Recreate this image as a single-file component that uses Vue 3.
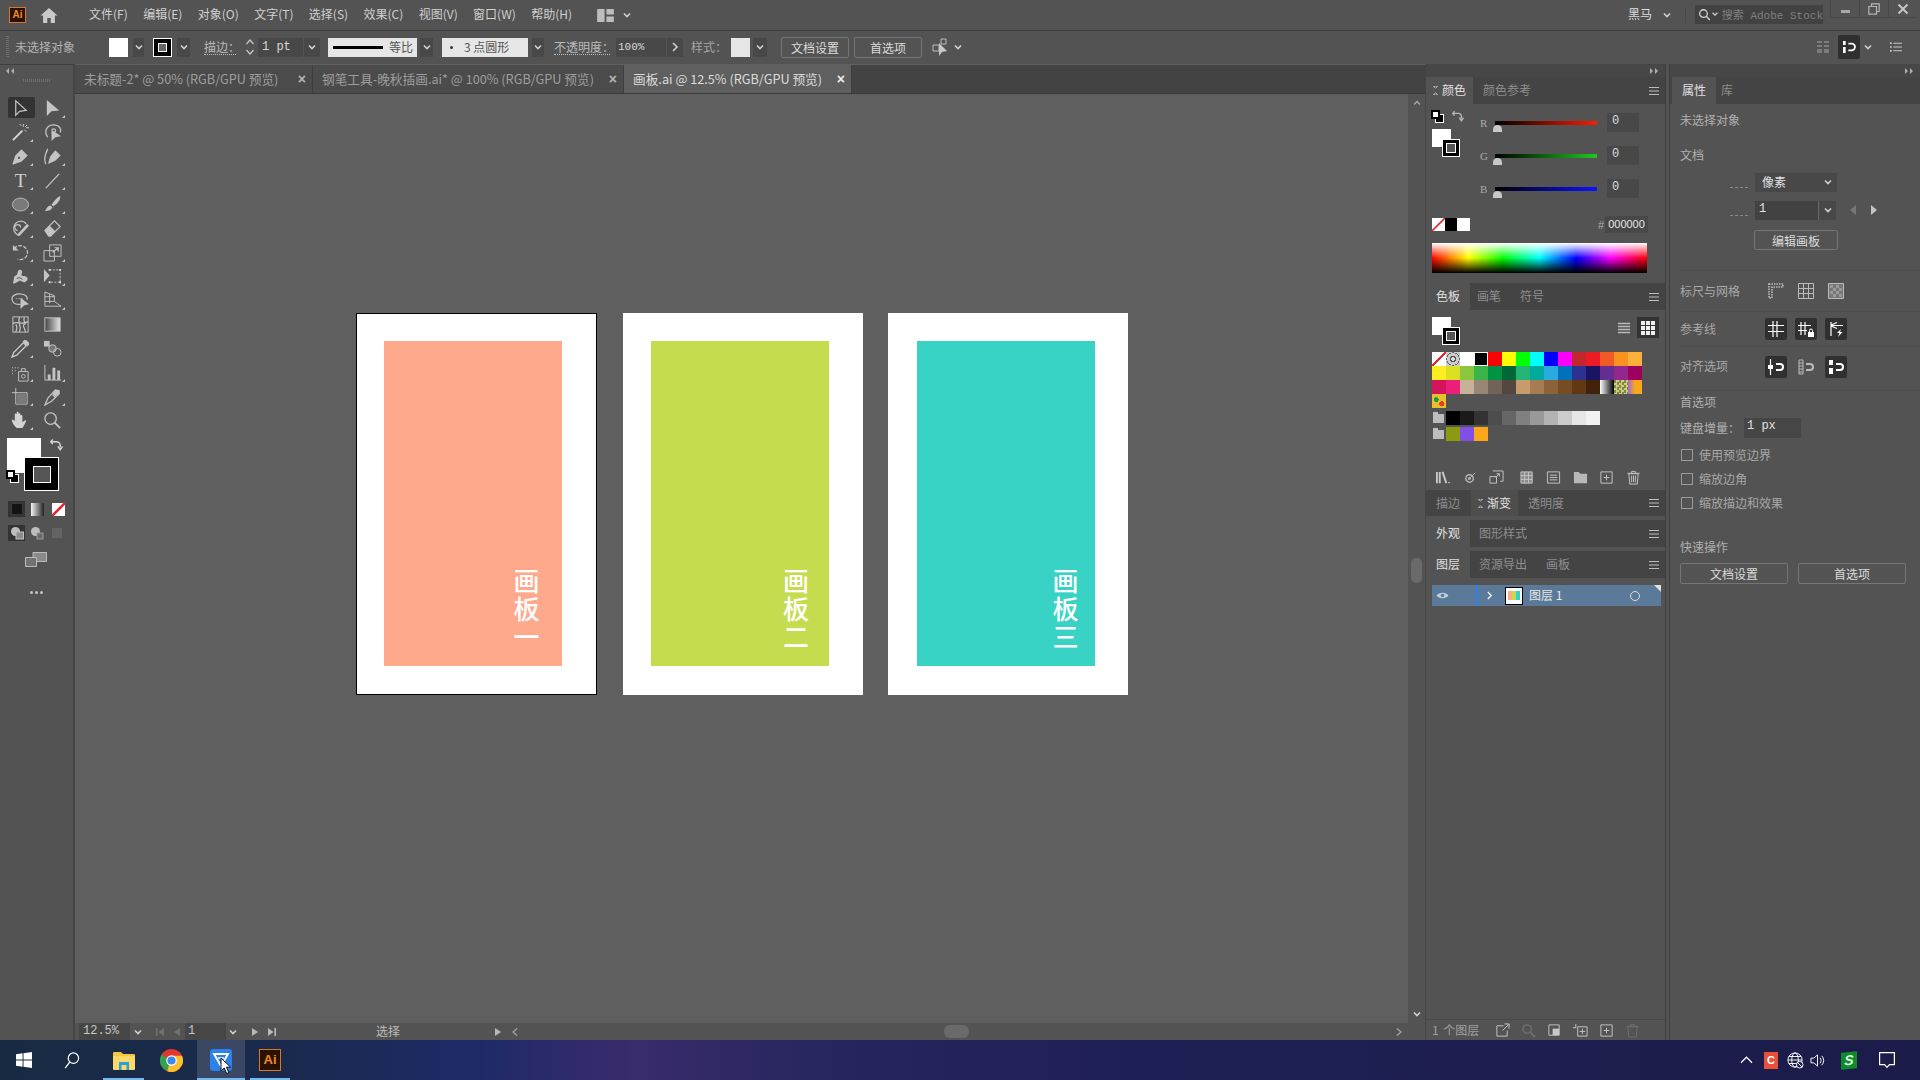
<template>
  <div class="app">
    <svg class="sprite" width="0" height="0">
      <symbol id="chev" viewBox="0 0 10 10"><path d="M2 3.5 5 6.5 8 3.5" fill="none" stroke="currentColor" stroke-width="1.6" /></symbol>
      <symbol id="burger" viewBox="0 0 12 10"><path d="M1 1.5h10M1 5h10M1 8.5h10" stroke="currentColor" stroke-width="1" /></symbol>
      <symbol id="dbl" viewBox="0 0 10 8"><path d="M1 1l3 3-3 3zM6 1l3 3-3 3z" fill="currentColor" /></symbol>
      <symbol id="mag" viewBox="0 0 24 22">
        <path d="M3 2h4v6H3zM3 11h4v9H3z" fill="currentColor" />
        <path d="M11 6h5a5 5 0 0 1 0 10h-5" fill="none" stroke="currentColor" stroke-width="2.6" />
      </symbol>
    </svg>

    <!-- menu bar -->
    <header class="menubar">
      <div class="ai-logo">Ai</div>
      <svg class="home" viewBox="0 0 18 16"><path d="M9 1 0.5 8.5h2.6V16h4.2v-5h3.4v5h4.2V8.5h2.6z" fill="#c9c9c9" /></svg>
      <nav class="menus"><span v-for="m in menus" :key="m">{{ m }}</span></nav>
      <svg class="wsp" viewBox="0 0 18 14"><path d="M0 0h8v14H0zM10 0h8v6h-8zM10 8h8v6h-8z" fill="#bdbdbd" /></svg>
      <svg class="ic10 wsp-c"><use href="#chev" /></svg>
      <div class="right-menu">
        <span class="user">黑马</span>
        <svg class="ic10 user-c"><use href="#chev" /></svg>
        <i class="vsep"></i>
        <div class="stock">
          <svg class="stock-i" viewBox="0 0 14 14"><circle cx="6" cy="6" r="4.2" fill="none" stroke="#d0d0d0" stroke-width="1.4" /><path d="M9 9l4 4" stroke="#d0d0d0" stroke-width="1.6" /></svg>
          <svg class="ic8"><use href="#chev" /></svg>
          <span>搜索 Adobe Stock</span>
        </div>
        <div class="winbtns">
          <span class="wb"><i class="min"></i></span>
          <span class="wb"><svg width="12" height="12" viewBox="0 0 12 12"><path d="M3.5 3V.8h7.7v7.7H9M.8 3.5h7.7v7.7H.8z" fill="none" stroke="#b5b5b5" stroke-width="1.2" /></svg></span>
          <span class="wb"><svg width="12" height="12" viewBox="0 0 12 12"><path d="M1.5 1.5l9 9M10.5 1.5l-9 9" stroke="#c4c4c4" stroke-width="2" /></svg></span>
        </div>
      </div>
    </header>

    <!-- control bar -->
    <div class="controlbar">
      <i class="grip"></i>
      <span class="c-label">未选择对象</span>
      <i class="c-fill"></i>
      <span class="c-chev c1"><svg class="ic10"><use href="#chev" /></svg></span>
      <span class="c-stroke"><i></i></span>
      <span class="c-chev c2"><svg class="ic10"><use href="#chev" /></svg></span>
      <span class="c-under c-strokelabel">描边：</span>
      <svg class="c-spin" viewBox="0 0 10 20"><path d="M1.5 7 5 3l3.5 4M1.5 13 5 17l3.5-4" fill="none" stroke="#c8c8c8" stroke-width="1.2" /></svg>
      <span class="c-input c-pt">1 pt</span>
      <span class="c-chev c3"><svg class="ic10"><use href="#chev" /></svg></span>
      <span class="c-line"><i></i><b>等比</b></span>
      <span class="c-chev c4"><svg class="ic10"><use href="#chev" /></svg></span>
      <span class="c-point"><i></i>3 点圆形</span>
      <span class="c-chev c5"><svg class="ic10"><use href="#chev" /></svg></span>
      <span class="c-under c-opacity">不透明度：</span>
      <span class="c-input c-pct">100%</span>
      <span class="c-chev c6"><svg width="8" height="12" viewBox="0 0 8 12"><path d="M2 2l4 4-4 4" fill="none" stroke="#d0d0d0" stroke-width="1.6" /></svg></span>
      <span class="c-style">样式：</span>
      <i class="c-sw"></i>
      <span class="c-chev c7"><svg class="ic10"><use href="#chev" /></svg></span>
      <button class="btn c-b1">文档设置</button>
      <button class="btn c-b2">首选项</button>
      <svg class="c-arr" viewBox="0 0 16 20"><path d="M1 8h6v6H1zM9 2h5v5H9z" fill="none" stroke="#bdbdbd" /><path d="M7 6v13l3-4 5-1z" fill="#c8c8c8" /></svg>
      <svg class="ic10 c-arr-c"><use href="#chev" /></svg>
      <div class="c-right">
        <svg class="c-grid" viewBox="0 0 12 12"><path d="M0 0h5v2H0zM7 0h5v2H7zM0 4h5v2H0zM7 4h5v2H7zM0 8h5v4H0zM7 8h5v4H7z" fill="#7c7c7c" /></svg>
        <span class="c-snap"><svg width="16" height="16" class="wh"><use href="#mag" /></svg></span>
        <svg class="ic10 c-snap-c"><use href="#chev" /></svg>
        <svg class="c-list" viewBox="0 0 14 12"><path d="M4 1.5h10M4 6h10M4 10.5h10" stroke="#c8c8c8" stroke-width="1.2" /><path d="M0 .5h2v2H0zM0 5h2v2H0zM0 9.5h2v2H0z" fill="#c8c8c8" /></svg>
      </div>
    </div>

    <div class="workspace">
      <!-- tools -->
      <aside class="toolbar">
        <svg class="tb-dbl ic8dim" viewBox="0 0 10 8"><path d="M4 1 1 4l3 3zM9 1 6 4l3 3z" fill="#b0b0b0" /></svg>
        <div class="tb-grip"></div>
        <div class="tool-grid">
          <div v-for="(t, i) in tools" :key="i" class="tool" :class="{ sel: i === 0, more: t.more }">
            <svg viewBox="0 0 20 20" v-html="t.svg"></svg>
          </div>
        </div>
        <div class="tb-fs">
          <i class="tb-fill"></i>
          <i class="tb-stroke"><b></b></i>
          <svg class="tb-swap" viewBox="0 0 14 14"><path d="M1 4h6a4 4 0 0 1 4 4v2M3 1.5 .8 4 3 6.5M8.5 9l2.5 3.5L13.5 9" fill="none" stroke="#d5d5d5" stroke-width="1.6" /></svg>
          <span class="def"><i></i><b></b></span>
        </div>
        <div class="tb-mode">
          <span class="on"><i class="m-color"></i></span>
          <span><i class="m-grad"></i></span>
          <span><svg width="13" height="13" viewBox="0 0 13 13"><path d="M0 0h13v13H0z" fill="#fff" /><path d="M0 13 13 0" stroke="#e3272c" stroke-width="2.6" /></svg></span>
        </div>
        <div class="tb-draw">
          <span class="on"><svg width="14" height="14" viewBox="0 0 14 14"><circle cx="5.5" cy="5.5" r="4.5" fill="#bdbdbd" /><rect x="6" y="6" width="7.5" height="7" fill="#8c8c8c" stroke="#c0c0c0" /></svg></span>
          <span><svg width="14" height="14" viewBox="0 0 14 14"><circle cx="5.5" cy="5.5" r="4.5" fill="#bdbdbd" /><rect x="7" y="7" width="6" height="6" fill="#6c6c6c" stroke="#999" /></svg></span>
          <span class="off"><svg width="14" height="14" viewBox="0 0 14 14"><rect x="2" y="2" width="10" height="10" fill="#696969" /></svg></span>
        </div>
        <svg class="tb-screen" viewBox="0 0 22 15"><path d="M8 .5h13.5v9H8z" fill="#8a8a8a" stroke="#bcbcbc" /><path d="M.5 5.5h11v9H.5z" fill="#727272" stroke="#bcbcbc" /></svg>
        <div class="tb-dots"><i></i><i></i><i></i></div>
      </aside>

      <!-- document area -->
      <main class="center">
        <div class="tabs">
          <div class="tab t1">未标题-2* @ 50% (RGB/GPU 预览)<b>×</b></div>
          <div class="tab t2">钢笔工具-晚秋插画.ai* @ 100% (RGB/GPU 预览)<b>×</b></div>
          <div class="tab t3 active">画板.ai @ 12.5% (RGB/GPU 预览)<b>×</b></div>
        </div>
        <div class="canvas-row">
          <div class="canvas">
            <div v-for="a in boards" :key="a.text" class="board" :class="a.cls">
              <div class="inner" :style="{ background: a.color, paddingRight: a.right + 'px' }">
                <span class="board-text">{{ a.text }}</span>
              </div>
            </div>
          </div>
          <div class="vscroll">
            <svg class="ic10" viewBox="0 0 10 10"><path d="M2 6.5 5 3.5 8 6.5" fill="none" stroke="#a8a8a8" stroke-width="1.4" /></svg>
            <i class="vthumb"></i>
            <svg class="ic10"><use href="#chev" /></svg>
          </div>
        </div>
        <div class="status">
          <span class="st-zoom">12.5%</span>
          <svg class="ic10 st-c1"><use href="#chev" /></svg>
          <svg class="st-a a1" viewBox="0 0 10 10"><path d="M1 1h1.6v8H1zM9 1v8L3.5 5z" fill="#707070" /></svg>
          <svg class="st-a a2" viewBox="0 0 10 10"><path d="M8 1v8L2 5z" fill="#707070" /></svg>
          <span class="st-page">1</span>
          <svg class="ic10 st-c2"><use href="#chev" /></svg>
          <svg class="st-a a3" viewBox="0 0 10 10"><path d="M2 1v8l6-4z" fill="#b8b8b8" /></svg>
          <svg class="st-a a4" viewBox="0 0 10 10"><path d="M1 1v8l5.5-4zM7.4 1H9v8H7.4z" fill="#b8b8b8" /></svg>
          <span class="st-mode">选择</span>
          <svg class="st-a a5" viewBox="0 0 10 10"><path d="M2 1v8l6-4z" fill="#b8b8b8" /></svg>
          <svg class="st-a a6" viewBox="0 0 10 10"><path d="M7 1.5 3 5l4 3.5" fill="none" stroke="#a8a8a8" stroke-width="1.2" /></svg>
          <i class="hthumb"></i>
          <svg class="st-a a7" viewBox="0 0 10 10"><path d="M3 1.5 7 5 3 8.5" fill="none" stroke="#a8a8a8" stroke-width="1.2" /></svg>
        </div>
      </main>

      <!-- colour / swatches / layers -->
      <section class="dock">
        <div class="dock-strip"><svg class="dbl"><use href="#dbl" /></svg></div>

        <div class="ptabs h-color">
          <span class="ptab active"><em class="updown"></em>颜色</span>
          <span class="ptab-off o-guide">颜色参考</span>
          <svg class="burger"><use href="#burger" /></svg>
        </div>
        <div class="color-body">
          <div class="color-top">
            <div class="stack">
              <span class="def small"><i></i><b></b></span>
              <svg class="swap" viewBox="0 0 14 14"><path d="M1 4h6a4 4 0 0 1 4 4v2M3 1.5 .8 4 3 6.5M8.5 9l2.5 3.5L13.5 9" fill="none" stroke="#b5b5b5" stroke-width="1.6" /></svg>
              <div class="fs"><i class="fs-fill"></i><i class="fs-stroke"><b></b></i></div>
            </div>
            <div class="sliders">
              <div v-for="c in channels" :key="c.n" class="slider-row">
                <span class="ch">{{ c.n }}</span>
                <div class="track"><i :style="{ background: `linear-gradient(to right, #000, ${c.c})` }"></i><em></em></div>
                <span class="num">0</span>
              </div>
            </div>
          </div>
          <div class="hex-row">
            <svg class="sw13" viewBox="0 0 13 13"><path d="M0 0h13v13H0z" fill="#fff" /><path d="M0 13 13 0" stroke="#e3272c" stroke-width="1.6" /></svg>
            <i class="sw-k"></i><i class="sw-w"></i>
            <span class="hash">#</span>
            <span class="hex">000000</span>
          </div>
          <div class="spectrum"></div>
        </div>

        <div class="ptabs h-swatch">
          <span class="ptab active plain">色板</span>
          <span class="ptab-off o-brush">画笔</span>
          <span class="ptab-off o-sym">符号</span>
          <svg class="burger"><use href="#burger" /></svg>
        </div>
        <div class="swatch-body">
          <div class="sw-top">
            <div class="fs"><i class="fs-fill"></i><i class="fs-stroke"><b></b></i></div>
            <svg class="sw-list" viewBox="0 0 12 12"><path d="M0 1.5h12M0 4.5h12M0 7.5h12M0 10.5h12" stroke="#bdbdbd" stroke-width="1.5" /></svg>
            <span class="sw-gridbtn"><svg width="14" height="14" viewBox="0 0 14 14"><path d="M0 0h4v4H0zM5 0h4v4H5zM10 0h4v4h-4zM0 5h4v4H0zM5 5h4v4H5zM10 5h4v4h-4zM0 10h4v4H0zM5 10h4v4H5zM10 10h4v4h-4z" fill="#eee" /></svg></span>
          </div>
          <div class="sw-grid">
            <div v-for="(row, r) in swatchRows" :key="r" class="sw-row" :class="'r' + r">
              <i v-for="(c, k) in row" :key="k" class="cell" :class="c.startsWith('#') ? '' : c" :style="c.startsWith('#') ? { background: c } : null"></i>
            </div>
          </div>
          <div class="sw-foot">
            <svg v-for="(ic, i) in swatchFoot" :key="i" viewBox="0 0 16 16" v-html="ic"></svg>
          </div>
        </div>

        <div class="ptabs h-mini">
          <span class="ptab-off o-stroke">描边</span>
          <span class="ptab active mid"><em class="updown"></em>渐变</span>
          <span class="ptab-off o-trans">透明度</span>
          <svg class="burger"><use href="#burger" /></svg>
        </div>
        <div class="ptabs h-mini gap">
          <span class="ptab active plain">外观</span>
          <span class="ptab-off o-gs">图形样式</span>
          <svg class="burger"><use href="#burger" /></svg>
        </div>
        <div class="ptabs h-mini gap">
          <span class="ptab active plain">图层</span>
          <span class="ptab-off o-gs">资源导出</span>
          <span class="ptab-off o-ab">画板</span>
          <svg class="burger"><use href="#burger" /></svg>
        </div>
        <div class="layers">
          <div class="layer-row">
            <svg class="eye" viewBox="0 0 14 10"><path d="M.5 5C3 1 11 1 13.5 5 11 9 3 9 .5 5z" fill="#c5d0dc" /><circle cx="7" cy="5" r="2" fill="#5b7a99" /></svg>
            <i class="l-bar"></i>
            <svg class="l-arrow" viewBox="0 0 8 10"><path d="M2 1l4 4-4 4" fill="none" stroke="#eee" stroke-width="1.6" /></svg>
            <span class="l-thumb"><i></i></span>
            <span class="l-name">图层 1</span>
            <i class="l-circle"></i>
            <i class="l-corner"></i>
          </div>
        </div>
        <div class="layers-foot">
          <span>1 个图层</span>
          <svg v-for="(ic, i) in layerFoot" :key="i" viewBox="0 0 16 16" v-html="ic"></svg>
        </div>
      </section>

      <!-- properties -->
      <section class="props">
        <div class="dock-strip"><svg class="dbl"><use href="#dbl" /></svg></div>
        <div class="ptabs h-color">
          <span class="ptab active plain prop-tab">属性</span>
          <span class="ptab-off o-lib">库</span>
        </div>
        <div class="p-body">
          <div class="p-title first">未选择对象</div>
          <div class="p-title doc">文档</div>
          <div class="p-row r-unit">
            <i class="dash"></i>
            <span class="p-select">像素<svg class="ic10"><use href="#chev" /></svg></span>
          </div>
          <div class="p-row r-ab">
            <i class="dash"></i>
            <span class="p-abnum">1</span>
            <span class="p-abchev"><svg class="ic10"><use href="#chev" /></svg></span>
            <svg class="p-nav dim" viewBox="0 0 8 10"><path d="M7 0v10L1 5z" fill="#777" /></svg>
            <svg class="p-nav" viewBox="0 0 8 10"><path d="M1 0v10l6-5z" fill="#c4c4c4" /></svg>
          </div>
          <button class="btn p-edit">编辑画板</button>

          <div class="p-sec s-ruler">
            <span class="p-lab">标尺与网格</span>
            <span class="p-ic"><svg viewBox="0 0 16 16"><path d="M1 1h14v3H4v11H1z" fill="none" stroke="#bbb" stroke-dasharray="1.5 1" stroke-width="1.6" /></svg></span>
            <span class="p-ic"><svg viewBox="0 0 16 16"><path d="M.5.5h15v15H.5zM5.5.5v15M10.5.5v15M.5 5.5h15M.5 10.5h15" fill="none" stroke="#bbb" /></svg></span>
            <span class="p-ic"><svg viewBox="0 0 16 16"><path d="M.5.5h15v15H.5z" fill="#777" stroke="#bbb" /><path d="M2 2h3v3H2zM8 2h3v3H8zM5 5h3v3H5zM11 5h3v3h-3zM2 8h3v3H2zM8 8h3v3H8zM5 11h3v3H5zM11 11h3v3h-3z" fill="#999" /></svg></span>
          </div>
          <div class="p-sec s-guide">
            <span class="p-lab">参考线</span>
            <span class="p-ic dark"><svg viewBox="0 0 16 16"><path d="M5 0v16M9 0v16M0 4.5h16M0 10.5h16" stroke="#fff" stroke-width="1.2" /></svg></span>
            <span class="p-ic dark"><svg viewBox="0 0 16 16"><path d="M3 1v13M7 1v13M0 4.5h13M0 9.5h9" stroke="#fff" stroke-width="1.2" /><path d="M10 11h6v5h-6z" fill="#fff" /><path d="M11.5 11V9.5a1.5 1.5 0 0 1 3 0V11" fill="none" stroke="#fff" /></svg></span>
            <span class="p-ic dark"><svg viewBox="0 0 16 16"><path d="M3 1v14M3 4l6-2.5M3 5l6 2.5M3 4.5h12" stroke="#fff" stroke-width="1.2" fill="none" /><path d="M13 8l-4 4h2.5L10 16l4.5-5H12z" fill="#fff" /></svg></span>
          </div>
          <div class="p-sec s-align">
            <span class="p-lab">对齐选项</span>
            <span class="p-ic dark"><svg viewBox="0 0 16 16"><path d="M2.5 0v16" stroke="#fff" stroke-width="1.2" /><path d="M0 6h5v4H0z" fill="#fff" /><path d="M8 5h4a3 3 0 0 1 0 6H8" fill="none" stroke="#fff" stroke-width="2" /></svg></span>
            <span class="p-ic"><svg viewBox="0 0 16 16"><path d="M1 1h4v14H1zM1 4h4M1 7h4M1 10h4M1 13h4" fill="none" stroke="#bbb" /><path d="M8 5h4a3 3 0 0 1 0 6H8" fill="none" stroke="#bbb" stroke-width="2" /></svg></span>
            <span class="p-ic dark"><svg viewBox="0 0 16 16"><path d="M1 1h4v5H1zM1 9h4v6H1z" fill="#fff" /><path d="M8 5h4a3 3 0 0 1 0 6H8" fill="none" stroke="#fff" stroke-width="2" /></svg></span>
          </div>

          <div class="p-title pref">首选项</div>
          <div class="p-key"><span>键盘增量：</span><span class="p-inp">1 px</span></div>
          <label class="p-check"><i></i>使用预览边界</label>
          <label class="p-check"><i></i>缩放边角</label>
          <label class="p-check"><i></i>缩放描边和效果</label>
          <div class="p-title quick">快速操作</div>
          <div class="p-btns">
            <button class="btn">文档设置</button>
            <button class="btn">首选项</button>
          </div>
        </div>
      </section>
    </div>

    <!-- windows taskbar -->
    <footer class="taskbar">
      <svg class="tk win" viewBox="0 0 17 17"><path d="M0 2.4 7 1.4v6.6H0zM8 1.2 17 0v8H8zM0 9h7v6.6l-7-1zM8 9h9v8l-9-1.2z" fill="#fff" /></svg>
      <svg class="tk search" viewBox="0 0 16 18"><circle cx="9.5" cy="6.5" r="5.5" fill="none" stroke="#fff" stroke-width="1.3" /><path d="M5.5 10.8.8 17" stroke="#fff" stroke-width="1.4" /></svg>
      <span class="tk-slot s-exp">
        <svg class="tk" viewBox="0 0 22 19"><path d="M0 2a1 1 0 0 1 1-1h7l2 2h11a1 1 0 0 1 1 1v14H0z" fill="#f4c542" /><path d="M0 5h22v13a1 1 0 0 1-1 1H1a1 1 0 0 1-1-1z" fill="#fbd968" /><path d="M6 11h10v8h-2.500v-5h-5v5H6z" fill="#2a9fe0" /></svg>
      </span>
      <span class="tk-slot s-chrome">
        <svg class="tk" viewBox="0 0 24 24"><circle cx="12" cy="12" r="12" fill="#e0382e" /><path d="M12 12 1.6 6a12 12 0 0 0 6 17z" fill="#2ea44f" /><path d="M12 7h10.900A12 12 0 0 1 7.600 23.100z" fill="#fbc02d" /><circle cx="12" cy="12" r="5.500" fill="#fff" /><circle cx="12" cy="12" r="4.300" fill="#3f86ee" /></svg>
      </span>
      <span class="tk-slot s-app">
        <svg class="tk" viewBox="0 0 22 22"><rect width="22" height="22" rx="3" fill="#2a82ea" /><path d="M4 5h14l-7 12z" fill="none" stroke="#fff" stroke-width="2" /><path d="M8 9h6" stroke="#fff" stroke-width="1.500" /></svg>
        <svg class="cursor" viewBox="0 0 12 18"><path d="M1 1v13l3.200-3 2.500 5.500 2.200-1-2.500-5.300h4.300z" fill="#fff" stroke="#111" /></svg>
        <i class="badge"></i>
      </span>
      <span class="tk-slot s-ai"><span class="ai-tk">Ai</span></span>
      <div class="tray">
        <svg class="t-up" viewBox="0 0 14 8"><path d="M1 7l6-6 6 6" fill="none" stroke="#fff" stroke-width="1.300" /></svg>
        <span class="t-c">C</span>
        <svg class="t-globe" viewBox="0 0 18 18"><circle cx="8.500" cy="8.500" r="7.500" fill="none" stroke="#fff" /><ellipse cx="8.500" cy="8.500" rx="3.500" ry="7.500" fill="none" stroke="#fff" /><path d="M1 8.500h15M2 4.800h13M2 12.200h13" stroke="#fff" /><circle cx="13.500" cy="13.500" r="3.500" fill="#1d1d50" stroke="#fff" /><path d="M11 11l5 5" stroke="#fff" /></svg>
        <svg class="t-sound" viewBox="0 0 16 16"><path d="M1 5.500h3L8 2v12L4 10.500H1z" fill="none" stroke="#fff" /><path d="M10.500 5a4 4 0 0 1 0 6M12.500 3a7 7 0 0 1 0 10" fill="none" stroke="#fff" /></svg>
        <span class="t-s">S</span>
        <svg class="t-note" viewBox="0 0 16 16"><path d="M.6.6h14.800v12H10.500L8 15.300l-2.500-2.700H.6z" fill="none" stroke="#fff" stroke-width="1.200" /></svg>
      </div>
    </footer>
  </div>
</template>

<script setup>
const menus = ['文件(F)', '编辑(E)', '对象(O)', '文字(T)', '选择(S)', '效果(C)', '视图(V)', '窗口(W)', '帮助(H)']

const boards = [
  { text: '画板一', color: '#ffa98c', right: 23, cls: 'b1' },
  { text: '画板二', color: '#c5dc4f', right: 20, cls: 'b2' },
  { text: '画板三', color: '#38d3c4', right: 17, cls: 'b3' }
]

const channels = [
  { n: 'R', c: '#ff1a00' },
  { n: 'G', c: '#1fc81f' },
  { n: 'B', c: '#0a14ff' }
]

const line = 'fill="none" stroke="#c4c4c4" stroke-width="1.3"'
const solid = 'fill="#c4c4c4"'

const tools = [
  { svg: `<path d="M5 2v15l4-4 7-1z" ${line} />` },
  { svg: `<path d="M4 1v17l5-5 8-1z" ${solid} />`, more: true },
  { svg: `<path d="M2 18 12 8" stroke="#d8d8d8" stroke-width="2" /><path d="M13 1v3M16 5h3M14 7l2 2M11 3 9 1M17 2l-2 2" stroke="#ccc" />`, more: true },
  { svg: `<path d="M5 15C0 8 5 2 11 2s9 4 7 8" ${line} /><path d="M9 7c3-2 5 0 4 2l-4 2" ${line} /><path d="M9 7v12l4-4 6-1z" ${solid} />` },
  { svg: `<path d="M2 18 5 9 11 3l6 6-6 6zM2 18l5-5" ${solid} stroke="#c4c4c4" /><circle cx="8.500" cy="11.500" r="1.200" fill="#535353" />`, more: true },
  { svg: `<path d="M3 18C0 12 3 6 5 2" ${line} /><path d="M6 17 8 10l5-6 5 5-5 5zM6 17l4-4" ${solid} stroke="#c4c4c4" />`, more: true },
  { svg: `<text x="10" y="17" text-anchor="middle" font-family="Liberation Serif, serif" font-size="20" fill="#cfcfcf">T</text>`, more: true },
  { svg: `<path d="M3 18 17 3" stroke="#c4c4c4" stroke-width="1.300" />`, more: true },
  { svg: `<ellipse cx="10" cy="10" rx="8.500" ry="6.800" fill="#7a7a7a" stroke="#b8b8b8" />`, more: true },
  { svg: `<path d="M18 1c1 4-3 8-7 11l-2-2c3-4 6-8 9-9z" ${solid} /><path d="M8 11c-3 0-4 3-6 6 4 0 7-1 8-4z" ${solid} />`, more: true },
  { svg: `<path d="M16 5A7.500 7.500 0 1 0 8 17" ${line} stroke-width="2" /><path d="M10 9a3 3 0 1 0-3 3" ${line} /><path d="M6 17 17 5l2 2L9 18z" ${solid} />`, more: true },
  { svg: `<path d="M2 12 12 2l6 6-10 10H6z" fill="none" stroke="#c4c4c4" stroke-width="1.300" /><path d="M7 7l6 6L8 18H6l-4-6z" ${solid} />`, more: true },
  { svg: `<path d="M3 6c4-5 12-4 14 2s-4 11-10 9" ${line} stroke-width="1.800" stroke-dasharray="4 1.500" /><path d="M2 2v6h6z" ${solid} />`, more: true },
  { svg: `<path d="M1 8h11v11H1z" fill="none" stroke="#c4c4c4" /><path d="M7 2h12v12H7z" fill="none" stroke="#c4c4c4" /><path d="M10 10l6-5M12 5h4v4" ${line} />`, more: true },
  { svg: `<path d="M2 17c2-5 0-7 3-8s1-5 4-6 3 3 2 5 4 1 6 3-2 6-4 5-4-2-5-1-5 3-6 2z" ${solid} /><path d="M6 12c2-1 4-1 6 1" fill="none" stroke="#535353" />`, more: true },
  { svg: `<path d="M1 2v14l6-7z" ${solid} /><path d="M7 3h11v13H7" fill="none" stroke="#c4c4c4" stroke-dasharray="2 1.500" /><path d="M6 2h2v2H6zM17 2h2v2h-2zM17 15h2v2h-2zM6 15h2v2H6z" fill="#e0e0e0" />`, more: true },
  { svg: `<path d="M10 14C3 15 1 11 1 8s4-5 8-5 9 2 8 6" ${line} /><path d="M5 8h1M8 8h1M11 8h1" stroke="#ddd" /><path d="M10 7v12l4-4 5-1z" ${solid} />`, more: true },
  { svg: `<path d="M2 1v15h17L12 11V5zM2 6h10M2 11h10M7 3v10" fill="none" stroke="#c4c4c4" />`, more: true },
  { svg: `<rect x="2" y="2" width="16" height="16" fill="none" stroke="#c4c4c4" /><path d="M2 9c5-3 8 2 16-2M9 2c-3 6 3 9 0 16M5 18c2-5 1-7 0-8M14 2c-2 5 3 7 0 8s2 5 1 8" ${line} />` },
  { svg: `<defs><linearGradient id="tg"><stop offset="0" stop-color="#444" /><stop offset="1" stop-color="#e6e6e6" /></linearGradient></defs><rect x="2" y="3" width="16" height="14" fill="url(#tg)" stroke="#c4c4c4" />` },
  { svg: `<path d="M1 19l2-5L13 4l3 3L6 17z" fill="none" stroke="#d0d0d0" stroke-width="1.300" /><path d="M12 3l2-2 2 0 3 3 0 2-2 2-1-1z" ${solid} />`, more: true },
  { svg: `<path d="M1 2h6v6H1z" ${solid} /><circle cx="10" cy="10" r="4" fill="#777" stroke="#c4c4c4" /><circle cx="15" cy="14" r="4" fill="none" stroke="#c4c4c4" />` },
  { svg: `<path d="M1 5h1M4 5h1M7 5h1M1 8h1M4 8h1M1 11h1" stroke="#aaa" stroke-width="1.500" /><path d="M8 9h10v10H8zM11 9V6h4v3" fill="none" stroke="#c4c4c4" /><circle cx="13" cy="14" r="2" fill="none" stroke="#c4c4c4" />`, more: true },
  { svg: `<path d="M2 2v16h17" fill="none" stroke="#c4c4c4" /><path d="M5 12h3v6H5zM10 5h3v13h-3zM15 8h3v10h-3z" ${solid} />`, more: true },
  { svg: `<path d="M1 6h5M5 1v5M5 6h12v12H5z" fill="none" stroke="#c4c4c4" /><path d="M6 7h10v10H6z" fill="#7a7a7a" />`, more: true },
  { svg: `<path d="M2 19l3-7L13 3l4 1v3l-8 8zM10 8l3 3" fill="none" stroke="#c4c4c4" stroke-width="1.300" /><path d="M13 3l4 1v3l-4 3-3-3z" ${solid} />`, more: true },
  { svg: `<path d="M6 18C3 15 1 12 1 10s2-1 3 1V4c0-2 2-2 2 0V2c0-1.500 2-1.500 2 0v1c0-1 2-1 2 .500V5c0-1 2-1 2 0v7c2-2 4-3 4-2s-2 5-4 8z" fill="#d4d4d4" />`, more: true },
  { svg: `<circle cx="8" cy="8" r="6" fill="none" stroke="#c4c4c4" stroke-width="1.400" /><path d="M12 12l6 6" stroke="#c4c4c4" stroke-width="2" />` }
]

const swatchRows = [
  ['none', 'reg', '#ffffff', 'blk', '#ff0000', '#ffff00', '#00ff00', '#00ffff', '#0000ff', '#ff00ff', '#c1272d', '#ed1c24', '#f15a24', '#f7931e', '#fbb03b'],
  ['#fcee21', '#d9e021', '#8cc63f', '#39b54a', '#009245', '#006837', '#22b573', '#00a99d', '#29abe2', '#0071bc', '#2e3192', '#1b1464', '#662d91', '#93278f', '#9e005d'],
  ['#d4145a', '#ed1e79', '#c7b299', '#998675', '#736357', '#534741', '#c69c6d', '#a67c52', '#8c6239', '#754c24', '#603813', '#42210b', 'grad1', 'pat1', 'grad2'],
  ['pat2'],
  ['folder', '#000000', '#1a1a1a', '#333333', '#4d4d4d', '#666666', '#808080', '#999999', '#b3b3b3', '#cccccc', '#e6e6e6', '#f2f2f2'],
  ['folder', '#8b9a0f', '#7f4fe8', '#fba71b']
]

const swatchFoot = [
  `<path d="M1 2v12M4 2v12M7 2l4 12" fill="none" stroke="#c8c8c8" stroke-width="2" /><path d="M13 13h2v1h-2z" fill="#c8c8c8" />`,
  `<circle cx="7" cy="9" r="4" fill="none" stroke="#b8b8b8" stroke-width="1.500" /><path d="M5 11l8-8" stroke="#b8b8b8" /><circle cx="7" cy="9" r="1.500" fill="#b8b8b8" />`,
  `<path d="M4 1h11v11h-3" fill="none" stroke="#c8c8c8" /><path d="M1 7h7v7H1z" fill="none" stroke="#c8c8c8" /><path d="M7 8l4-4M8 4h3v3" fill="none" stroke="#c8c8c8" />`,
  `<path d="M1 2h12v12H1zM5 2v12M9 2v12M1 6h12M1 10h12" fill="#8a8a8a" stroke="#c8c8c8" />`,
  `<path d="M1.500 2h13v12h-13z" fill="none" stroke="#c8c8c8" /><path d="M4 5.500h8M4 8h8M4 10.500h8" stroke="#c8c8c8" />`,
  `<path d="M1 2h5l2 2h7v10H1z" fill="#b8b8b8" />`,
  `<path d="M2 2h12v12H2z" fill="none" stroke="#c8c8c8" /><path d="M8 5v6M5 8h6" stroke="#c8c8c8" />`,
  `<path d="M3 4h10l-1 11H4zM1.500 3.500h13M6 3.500V1.500h4v2M6 6v7M8 6v7M10 6v7" fill="none" stroke="#c8c8c8" />`
]

const layerFoot = [
  `<path d="M9 3H2v11h11V8M8 8l7-7M10 1h5v5" fill="none" stroke="#c8c8c8" />`,
  `<circle cx="6.500" cy="6.500" r="4.500" fill="none" stroke="#6f6f6f" stroke-width="1.500" /><path d="M10 10l5 5" stroke="#6f6f6f" stroke-width="2" />`,
  `<path d="M2 2h11v11H2z" fill="none" stroke="#c8c8c8" /><path d="M6 6h7v7H6z" fill="#c8c8c8" />`,
  `<path d="M5 4h10v10H5z" fill="none" stroke="#c8c8c8" /><path d="M10 6v6M7 9h6M3 1v4H0" fill="none" stroke="#c8c8c8" />`,
  `<path d="M2 2h12v12H2z" fill="none" stroke="#c8c8c8" /><path d="M8 5v6M5 8h6" stroke="#c8c8c8" />`,
  `<path d="M3 4h10l-1 11H4zM1.500 3.500h13M6 3.500V1.500h4v2" fill="none" stroke="#6f6f6f" />`
]
</script>

<style scoped>
.app {
  width: 1920px;
  height: 1080px;
  display: flex;
  flex-direction: column;
  overflow: hidden;
  background: #535353;
  color: #c8c8c8;
  font: 12px/1.2 "Noto Sans CJK SC", "Liberation Sans", sans-serif;
}
.sprite { position: absolute; }
.ic10 { width: 10px; height: 10px; color: #d0d0d0; flex: none; }
.ic8 { width: 8px; height: 8px; color: #d0d0d0; flex: none; }
i, em, b { font-style: normal; font-weight: normal; }

/* menu */
.menubar {
  height: 30px;
  display: flex;
  align-items: center;
  border-bottom: 1px solid #3c3c3c;
  box-sizing: content-box;
  flex: none;
}
.ai-logo {
  margin-left: 9px;
  width: 15px;
  height: 14px;
  background: #2b1200;
  border: 1px solid #d8782a;
  color: #f08a24;
  font: bold 10px/14px "Liberation Sans", sans-serif;
  text-align: center;
}
.home { width: 18px; height: 16px; margin-left: 14px; }
.menus { display: flex; gap: 15.4px; margin: -2px 0 0 31px; font-size: 12px; color: #d0d0d0; }
.wsp { width: 17px; height: 13px; margin-left: 25px; }
.wsp-c { margin-left: 8px; }
.right-menu { margin-left: auto; display: flex; align-items: center; height: 30px; padding-right: 3px; }
.user { font-size: 12px; color: #dcdcdc; margin-top: -2px; }
.user-c { margin-left: 10px; }
.vsep { width: 1px; height: 16px; background: #484848; margin-left: 13px; }
.stock {
  margin-left: 9px;
  width: 128px;
  height: 19px;
  margin-top: -2px;
  background: #424242;
  display: flex;
  align-items: center;
  padding-left: 3px;
  box-sizing: border-box;
  font: 11px "Liberation Mono", "Noto Sans CJK SC", monospace;
  color: #7f7f7f;
  white-space: nowrap;
}
.stock-i { width: 13px; height: 13px; }
.stock .ic8 { margin-right: 3px; }
.winbtns { display: flex; margin-left: 7px; align-self: flex-start; }
.wb {
  width: 28px;
  height: 17px;
  display: flex;
  align-items: center;
  justify-content: center;
  border-left: 1px solid #484848;
  border-bottom: 1px solid #484848;
}
.wb .min { width: 9px; height: 3px; background: #a8a8a8; margin-top: 6px; }

/* control bar */
.controlbar {
  height: 32px;
  padding-bottom: 1px;
  flex: none;
  display: flex;
  align-items: center;
  white-space: nowrap;
}
.grip {
  margin-left: 6px;
  width: 3px;
  height: 22px;
  background: repeating-linear-gradient(to bottom, #6e6e6e 0 1px, transparent 1px 2px);
}
.c-label { margin-left: 6px; width: 60px; color: #b4b4b4; }
.c-fill { margin-left: 34px; width: 19px; height: 19px; background: #fff; }
.c-chev { height: 19px; display: flex; align-items: center; justify-content: center; background: #484848; }
.c1 { margin-left: 5px; width: 11px; }
.c-stroke {
  margin-left: 9px;
  width: 19px;
  height: 19px;
  background: #000;
  border: 1px solid #fff;
  box-sizing: border-box;
  display: flex;
  align-items: center;
  justify-content: center;
}
.c-stroke i { width: 7px; height: 7px; border: 1px solid #fff; background: #666; }
.c2 { margin-left: 5px; width: 13px; }
.c-under { border-bottom: 1px dotted #bbb; color: #bbb; line-height: 15px; }
.c-strokelabel { margin-left: 14px; width: 32px; }
.c-spin { margin-left: 9px; width: 10px; height: 20px; }
.c-input {
  height: 19px;
  background: #484848;
  display: flex;
  align-items: center;
  padding-left: 4px;
  box-sizing: border-box;
  color: #d8d8d8;
  font: 12px "Liberation Mono", monospace;
}
.c-pt { margin-left: 3px; width: 45px; }
.c3 { margin-left: 1px; width: 16px; }
.c-line {
  margin-left: 8px;
  width: 89px;
  height: 19px;
  background: #e6e6e6;
  display: flex;
  align-items: center;
  box-sizing: border-box;
  padding-left: 5px;
  color: #555;
}
.c-line i { width: 50px; height: 3px; background: #000; }
.c-line b { margin-left: 6px; }
.c4 { margin-left: 3px; width: 13px; }
.c-point {
  margin-left: 9px;
  width: 86px;
  height: 19px;
  background: #e6e6e6;
  display: flex;
  align-items: center;
  box-sizing: border-box;
  padding-left: 8px;
  color: #555;
}
.c-point i { width: 3px; height: 3px; border-radius: 50%; background: #333; margin-right: 11px; }
.c5 { margin-left: 4px; width: 12px; }
.c-opacity { margin-left: 10px; width: 56px; }
.c-pct { margin-left: 6px; width: 50px; font-size: 11px; padding-left: 2px; }
.c6 { margin-left: 1px; width: 16px; }
.c-style { margin-left: 8px; width: 33px; color: #a4a4a4; }
.c-sw { margin-left: 7px; width: 19px; height: 19px; background: #e6e6e6; }
.c7 { margin-left: 3px; width: 14px; }
.btn {
  height: 21px;
  padding: 0;
  background: transparent;
  border: 1px solid #757575;
  border-radius: 2px;
  color: #dcdcdc;
  font: 12px "Noto Sans CJK SC", sans-serif;
}
.c-b1 { margin-left: 14px; width: 68px; }
.c-b2 { margin-left: 5px; width: 68px; }
.c-arr { margin-left: 10px; width: 16px; height: 20px; }
.c-arr-c { margin-left: 5px; }
.c-right { margin-left: auto; display: flex; align-items: center; padding-right: 18px; }
.c-grid { width: 12px; height: 12px; }
.c-snap {
  margin-left: 9px;
  width: 22px;
  height: 24px;
  background: #2f2f2f;
  border-radius: 2px;
  display: flex;
  align-items: center;
  justify-content: center;
}
.wh { color: #fff; }
.c-snap-c { margin-left: 3px; }
.c-list { margin-left: 17px; width: 12px; height: 12px; }

/* workspace */
.workspace { flex: 1; min-height: 0; display: flex; }
.toolbar {
  width: 73px;
  flex: none;
  background: #535353;
  border-right: 2px solid #454545;
  box-sizing: content-box;
  display: flex;
  flex-direction: column;
  align-items: flex-start;
  border-top: 1px solid #3f3f3f;
}
.tb-dbl { width: 10px; height: 8px; margin: 2px 0 0 5px; }
.tb-grip {
  width: 28px;
  height: 3px;
  margin: 4px 0 0 23px;
  background: repeating-linear-gradient(to right, #6e6e6e 0 1px, transparent 1px 2px);
}
.tool-grid {
  margin: 14px 0 0 4px;
  display: grid;
  grid-template-columns: 32px 32px;
  grid-auto-rows: 24px;
}
.tool { position: relative; display: flex; align-items: center; justify-content: center; }
.tool svg { width: 19px; height: 19px; }
.tool.sel::before {
  content: "";
  position: absolute;
  left: 4px;
  top: 1px;
  width: 27px;
  height: 21px;
  background: #333;
  border-radius: 2px;
}
.tool.sel svg { position: relative; }
.tool.more::after {
  content: "";
  position: absolute;
  right: 3px;
  bottom: 2px;
  border-style: solid;
  border-width: 0 0 3px 3px;
  border-color: transparent transparent #c4c4c4 transparent;
}
.tb-fs { position: relative; width: 66px; height: 56px; margin-top: 6px; }
.tb-fill { position: absolute; left: 7px; top: 0; width: 34px; height: 35px; background: #fff; }
.tb-stroke {
  position: absolute;
  left: 24px;
  top: 19px;
  width: 35px;
  height: 34px;
  box-sizing: border-box;
  background: #000;
  border: 1px solid #fff;
  display: flex;
  align-items: center;
  justify-content: center;
}
.tb-stroke b { width: 18px; height: 17px; border: 1px solid #fff; background: #555; box-sizing: border-box; }
.tb-swap { position: absolute; left: 50px; top: 0; width: 13px; height: 13px; }
.def { position: absolute; left: 7px; top: 33px; width: 11px; height: 11px; }
.def i, .def b { position: absolute; width: 7px; height: 7px; border: 1px solid #000; outline: 1px solid #fff; box-sizing: border-box; }
.def b { left: 0; top: 0; background: #fff; outline-color: #000; }
.def i { right: 0; bottom: 0; background: #000; }
.tb-mode, .tb-draw { display: flex; margin-left: 8px; }
.tb-mode { margin-top: 7px; gap: 4px; }
.tb-mode span, .tb-draw span { width: 17px; height: 16px; display: flex; align-items: center; justify-content: center; }
.tb-draw { margin-top: 8px; gap: 3px; }
.on { background: #333; }
.off { opacity: 0.8; }
.m-color { width: 10px; height: 10px; background: #141414; border: 1px solid #3a3a3a; }
.m-grad { width: 13px; height: 13px; background: linear-gradient(to right, #f5f5f5, #222); }
.tb-screen { width: 22px; height: 15px; margin: 11px 0 0 25px; }
.tb-dots { display: flex; gap: 2px; margin: 24px 0 0 30px; }
.tb-dots i { width: 3px; height: 3px; border-radius: 50%; background: #c4c4c4; }

/* centre */
.center { flex: 1; min-width: 0; display: flex; flex-direction: column; background: #5f5f5f; }
.tabs { height: 29px; flex: none; display: flex; background: #434343; border-bottom: 1px solid #3a3a3a; margin-top: 1px; box-sizing: border-box; }
.tab {
  height: 100%;
  display: flex;
  align-items: center;
  background: #4b4b4b;
  color: #9e9e9e;
  font-size: 12.7px;
  white-space: nowrap;
  box-sizing: border-box;
  padding-left: 9px;
  border-right: 1px solid #3e3e3e;
}
.tab b { margin-left: auto; margin-right: 6px; color: #b5b5b5; font: bold 14px "Liberation Sans", sans-serif; }
.t1 { width: 238px; }
.t2 { width: 311px; }
.t3 { width: 228px; }
.tab.active { background: #5f5f5f; color: #dcdcdc; }
.tab.active b { color: #eee; }
.canvas-row { flex: 1; min-height: 0; display: flex; }
.canvas {
  flex: 1;
  min-width: 0;
  display: flex;
  align-items: flex-start;
  gap: 25.5px;
  box-sizing: border-box;
  padding: 219px 0 0 281px;
}
.board { width: 240px; height: 382px; background: #fff; box-sizing: border-box; padding: 28px 0 0 28px; flex: none; }
.board.b1 { width: 241px; border: 1px solid #000; padding: 27px 0 0 27px; }
.board.b3 { padding-left: 29px; }
.inner { width: 178px; height: 325px; display: flex; justify-content: flex-end; box-sizing: border-box; padding-top: 227px; }
.board-text {
  writing-mode: vertical-rl;
  color: #fff;
  font: 500 26px/26px "Noto Sans CJK SC", sans-serif;
  letter-spacing: 2px;
  white-space: nowrap;
}
.vscroll {
  width: 17px;
  flex: none;
  background: #535353;
  display: flex;
  flex-direction: column;
  align-items: center;
  padding: 4px 0;
  box-sizing: border-box;
}
.vthumb { width: 11px; height: 25px; background: #6a6a6a; border-radius: 5px; margin: 450px 0 auto; }
.status {
  height: 17px;
  flex: none;
  background: #535353;
  display: flex;
  align-items: center;
  color: #c8c8c8;
  border-left: 0;
}
.st-zoom {
  margin-left: 4px;
  width: 51px;
  height: 17px;
  background: #464646;
  padding-left: 4px;
  box-sizing: border-box;
  font: 12px/17px "Liberation Mono", monospace;
}
.st-c1 { margin-left: 3px; }
.st-a { width: 10px; height: 10px; flex: none; }
.a1 { margin-left: 12px; }
.a2 { margin-left: 7px; }
.st-page {
  margin-left: 3px;
  width: 41px;
  height: 17px;
  background: #464646;
  padding-left: 3px;
  box-sizing: border-box;
  font: 12px/17px "Liberation Mono", monospace;
}
.st-c2 { margin-left: 2px; }
.a3 { margin-left: 12px; }
.a4 { margin-left: 7px; }
.st-mode { margin-left: 99px; color: #bcbcbc; }
.a5 { margin-left: 93px; }
.a6 { margin-left: 7px; }
.hthumb { width: 25px; height: 13px; background: #6a6a6a; border-radius: 6px; margin-left: 424px; }
.a7 { margin-left: 425px; }

/* docks */
.dock, .props { display: flex; flex-direction: column; flex: none; }
.dock { width: 241px; border-right: 1px solid #3e3e3e; border-left: 1px solid #454545; box-sizing: border-box; }
.props { width: 250px; margin-left: 3px; border-left: 1px solid #3e3e3e; box-sizing: content-box; background: #535353; }
.dock-strip { height: 13px; flex: none; display: flex; justify-content: flex-end; align-items: center; padding-right: 6px; background: #474747; }
.dbl { width: 10px; height: 8px; color: #b0b0b0; }
.ptabs {
  flex: none;
  display: flex;
  align-items: stretch;
  background: #444;
  position: relative;
}
.ptabs .burger { position: absolute; right: 5px; top: 50%; width: 12px; height: 10px; margin-top: -5px; color: #bcbcbc; }
.h-color { height: 27px; }
.h-swatch { height: 27px; }
.h-mini { height: 26px; }
.h-mini.gap { margin-top: 4px; height: 27px; }
.ptab { display: flex; align-items: center; background: #535353; color: #e0e0e0; box-sizing: border-box; width: 47px; padding-left: 7px; }
.ptab.plain { width: 44px; padding-left: 10px; }
.ptab.mid { width: 47px; margin-left: 11px; background: #4e4e4e; }
.updown { width: 5px; height: 9px; margin-right: 4px; background:
  linear-gradient(to top right, transparent 50%, #a0a0a0 50%) 0 0/2.5px 3px no-repeat,
  linear-gradient(to top left, transparent 50%, #a0a0a0 50%) 2.5px 0/2.5px 3px no-repeat,
  linear-gradient(to bottom right, transparent 50%, #a0a0a0 50%) 0 6px/2.5px 3px no-repeat,
  linear-gradient(to bottom left, transparent 50%, #a0a0a0 50%) 2.5px 6px/2.5px 3px no-repeat;
}
.ptab-off { display: flex; align-items: center; color: #8e8e8e; white-space: nowrap; }
.o-guide { margin-left: 10px; }
.o-brush { margin-left: 7px; }
.o-sym { margin-left: 19px; }
.o-stroke { margin-left: 10px; width: 24px; }
.o-trans { margin-left: 10px; }
.o-gs { margin-left: 9px; }
.o-ab { margin-left: 19px; }
.o-lib { margin-left: 5px; }
.prop-tab { width: 40px; padding-left: 5px; margin-left: 2px; }

.color-body { height: 179px; flex: none; padding: 2px 0 0 6px; box-sizing: border-box; }
.color-top { display: flex; height: 99px; }
.stack { position: relative; width: 48px; height: 99px; flex: none; }
.def.small { left: 0; top: 5px; }
.swap { position: absolute; left: 20px; top: 4px; width: 12px; height: 12px; }
.fs { position: relative; width: 28px; height: 28px; flex: none; }
.stack .fs { position: absolute; left: 0; top: 23px; }
.fs-fill { position: absolute; left: 0; top: 0; width: 19px; height: 18px; background: #fff; }
.fs-stroke {
  position: absolute;
  left: 10px;
  top: 10px;
  width: 18px;
  height: 18px;
  box-sizing: border-box;
  background: #000;
  border: 1px solid #fff;
  display: flex;
  align-items: center;
  justify-content: center;
}
.fs-stroke b { width: 10px; height: 10px; box-sizing: border-box; border: 1px solid #fff; background: #555; }
.slider-row { height: 33px; display: flex; align-items: center; }
.ch { width: 15px; color: #aaa; font: 11px "Liberation Serif", serif; }
.track { position: relative; width: 102px; height: 4px; }
.track i { display: block; height: 4px; }
.track em { position: absolute; left: -2px; top: 4px; width: 9px; height: 7px; background: #c8c8c8; border-radius: 5px 5px 0 0; }
.num { margin-left: 10px; width: 32px; height: 19px; background: #484848; padding-left: 5px; box-sizing: border-box; font: 12px/17px "Liberation Mono", monospace; color: #dcdcdc; }
.hex-row { margin-top: 11px; height: 17px; display: flex; align-items: center; }
.sw13 { width: 13px; height: 13px; }
.sw-k { width: 12px; height: 13px; background: #000; }
.sw-w { width: 13px; height: 13px; background: #fff; }
.hash { margin-left: 128px; width: 7px; color: #aaa; font: 11px "Liberation Sans", sans-serif; }
.hex { width: 43px; height: 17px; background: #484848; text-align: center; color: #e6e6e6; font: 11px/17px "Liberation Sans", sans-serif; }
.spectrum {
  margin-top: 10px;
  width: 215px;
  height: 30px;
  background:
    linear-gradient(to bottom, #fff 0%, rgba(255, 255, 255, 0) 50%, rgba(0, 0, 0, 0) 50%, #000 100%),
    linear-gradient(to right, #f00, #ff0 17%, #0f0 33%, #0ff 50%, #00f 67%, #f0f 83%, #f00);
}

.swatch-body { height: 180px; flex: none; display: flex; flex-direction: column; padding-left: 6px; box-sizing: border-box; }
.sw-top { display: flex; align-items: flex-start; padding-top: 7px; height: 42px; box-sizing: border-box; flex: none; }
.sw-list { width: 12px; height: 12px; margin: 5px 0 0 158px; flex: none; }
.sw-gridbtn { margin: 0 0 0 7px; width: 22px; height: 21px; background: #333; display: flex; align-items: center; justify-content: center; flex: none; }
.sw-row { display: flex; height: 14px; }
.sw-row.r4 { margin-top: 3px; }
.sw-row.r5 { margin-top: 2px; }
.cell { width: 14px; height: 14px; flex: none; }
.none { background: #fff linear-gradient(to top left, transparent 46%, #e3272c 46% 54%, transparent 54%); }
.reg { background: radial-gradient(circle, #ddd 0 20%, #555 21% 30%, #ccc 31% 60%, #666 61% 66%, #ccc 67%); }
.blk { background: #000; border: 1px solid #fff; box-sizing: border-box; }
.grad1 { background: linear-gradient(to right, #fff, #000); }
.pat1 { background: repeating-conic-gradient(#cfc98a 0 25%, #7f8a3a 0 50%) 0 0/5px 5px; }
.grad2 { background: linear-gradient(to right, #9d6ed0, #fba71b 50%); }
.pat2 { background: radial-gradient(circle at 30% 40%, #1b9a4a 0 18%, transparent 20%), radial-gradient(circle at 70% 70%, #e0402a 0 18%, transparent 20%), #e8c12a; }
.folder { background: linear-gradient(#bdbdbd, #bdbdbd) 1px 3px/11px 9px no-repeat, linear-gradient(#bdbdbd, #bdbdbd) 1px 1px/5px 3px no-repeat; }
.sw-foot { margin-top: auto; height: 26px; display: flex; align-items: center; padding-left: 4px; gap: 11.5px; flex: none; }
.sw-foot svg { width: 15px; height: 15px; flex: none; }
.sw-foot svg:nth-child(4) { margin-left: 4px; }

.layers { flex: 1; min-height: 0; padding: 7px 4px 0 6px; background: #535353; }
.layer-row {
  position: relative;
  height: 21px;
  background: #5b7a99;
  display: flex;
  align-items: center;
}
.eye { width: 13px; height: 9px; margin-left: 4px; }
.l-bar { width: 2px; height: 21px; background: #2f7ef0; margin-left: 27px; }
.l-arrow { width: 7px; height: 9px; margin-left: 8px; }
.l-thumb { margin-left: 12px; width: 18px; height: 18px; box-sizing: border-box; background: #fff; border: 1px solid #000; display: flex; align-items: center; justify-content: center; }
.l-thumb i { width: 12px; height: 9px; background: linear-gradient(to right, #ffa98c 0 33%, #c5dc4f 33% 66%, #38d3c4 66%); }
.l-name { margin-left: 6px; color: #e6e6e6; }
.l-circle { position: absolute; left: 198px; top: 6px; width: 8px; height: 8px; border: 1px solid #dcdcdc; border-radius: 50%; }
.l-corner { position: absolute; right: 0; top: 0; border-style: solid; border-width: 0 7px 7px 0; border-color: transparent #e0e0e0 transparent transparent; }
.layers-foot {
  height: 20px;
  flex: none;
  display: flex;
  align-items: center;
  padding-left: 6px;
  color: #a0a0a0;
  border-top: 1px solid #484848;
  gap: 11px;
}
.layers-foot span { width: 50px; margin-right: 2px; white-space: nowrap; word-spacing: 2px; }
.layers-foot svg { width: 15px; height: 15px; flex: none; }

/* properties */
.p-body { padding-left: 10px; color: #b0b0b0; font-size: 12px; }
.p-title { line-height: 14px; }
.first { margin-top: 9px; }
.doc { margin-top: 21px; }
.p-row { display: flex; align-items: center; position: relative; }
.dash { width: 18px; border-top: 1px dashed #888; margin: 10px 7px 0 50px; flex: none; }
.r-unit { margin-top: 10px; height: 20px; }
.p-select {
  width: 82px;
  height: 19px;
  background: #484848;
  display: flex;
  align-items: center;
  justify-content: space-between;
  padding: 0 4px 0 7px;
  box-sizing: border-box;
  color: #e0e0e0;
}
.r-ab { margin-top: 8px; height: 20px; }
.p-abnum { width: 63px; height: 19px; background: #424242; font: 12px/17px "Liberation Mono", monospace; color: #e6e6e6; padding-left: 4px; box-sizing: border-box; }
.p-abchev { width: 18px; height: 19px; background: #484848; display: flex; align-items: center; justify-content: center; border-left: 1px solid #6a6a6a; box-sizing: border-box; }
.p-nav { width: 8px; height: 10px; margin-left: 13px; }
.p-nav + .p-nav { margin-left: 13px; }
.p-edit { display: block; margin: 10px 0 0 74px; width: 84px; height: 20px; }
.p-sec { display: flex; align-items: center; border-top: 1px solid #4e4e4e; }
.s-ruler { margin-top: 20px; height: 40px; }
.s-guide { height: 34px; }
.s-align { height: 39px; }
.p-lab { width: 85px; flex: none; color: #a8a8a8; }
.p-ic { width: 22px; height: 22px; margin-right: 8px; display: flex; align-items: center; justify-content: center; flex: none; border-radius: 2px; }
.p-ic svg { width: 16px; height: 16px; }
.p-ic.dark { background: #303030; }
.pref { margin-top: 4px; padding-top: 4px; border-top: 1px solid #4e4e4e; }
.p-key { margin-top: 9px; display: flex; align-items: center; height: 20px; }
.p-key span:first-child { width: 64px; }
.p-inp { width: 57px; height: 20px; background: #464646; color: #e0e0e0; padding-left: 3px; box-sizing: border-box; font: 12px/17px "Liberation Mono", monospace; }
.p-check { display: flex; align-items: center; height: 24px; color: #a8a8a8; }
.p-check:first-of-type { margin-top: 5px; }
.p-check i { width: 10px; height: 10px; border: 1px solid #9a9a9a; margin: 0 6px 0 1px; }
.quick { margin-top: 25px; }
.p-btns { display: flex; gap: 10px; margin-top: 9px; }
.p-btns .btn { width: 108px; }

/* taskbar */
.taskbar {
  height: 40px;
  flex: none;
  display: flex;
  align-items: center;
  background: linear-gradient(to right, #182a42 0%, #1a2a4e 15%, #1e2a68 25%, #3a2b6c 33%, #27265f 42%, #1e1f54 60%, #1c1c4a 100%);
}
.tk { display: block; }
.win { width: 16px; height: 16px; margin-left: 16px; }
.search { width: 16px; height: 17px; margin-left: 32px; }
.tk-slot { position: relative; height: 40px; display: flex; align-items: center; justify-content: center; flex: none; box-sizing: border-box; }
.tk-slot::after { content: ""; position: absolute; left: 0; right: 0; bottom: 0; height: 2px; background: #76b9ed; }
.s-exp { width: 41px; margin-left: 23px; }
.s-exp .tk { width: 22px; height: 19px; }
.s-chrome { width: 24px; margin-left: 15px; }
.s-chrome::after { display: none; }
.s-chrome .tk { width: 23px; height: 23px; }
.s-app { width: 48px; margin-left: 14px; background: rgba(255, 255, 255, 0.14); }
.s-app .tk { width: 22px; height: 22px; }
.cursor { position: absolute; left: 23px; top: 17px; width: 12px; height: 18px; }
.badge { position: absolute; left: 31px; top: 22px; width: 7px; height: 7px; border-radius: 50%; background: #e0604a; z-index: -1; }
.s-ai { width: 40px; margin-left: 5px; }
.ai-tk {
  width: 22px;
  height: 22px;
  box-sizing: border-box;
  border: 1px solid #d8782a;
  background: #2b1200;
  color: #f08a24;
  font: bold 13px/20px "Liberation Sans", sans-serif;
  text-align: center;
}
.tray { margin-left: auto; display: flex; align-items: center; padding-right: 25px; }
.t-up { width: 13px; height: 8px; }
.t-c { margin-left: 11px; width: 14px; height: 17px; background: #e8503a; color: #fff; font: bold 11px/17px "Liberation Sans", sans-serif; text-align: center; }
.t-globe { margin-left: 9px; width: 17px; height: 17px; }
.t-sound { margin-left: 6px; width: 15px; height: 15px; }
.t-s { margin-left: 16px; width: 16px; height: 17px; background: #0f8a2c; color: #dfffe0; font: italic bold 14px/17px "Liberation Sans", sans-serif; text-align: center; transform: skewY(-6deg); }
.t-note { margin-left: 22px; width: 16px; height: 16px; }
</style>

<style>
html, body { margin: 0; background: #535353; }
</style>
